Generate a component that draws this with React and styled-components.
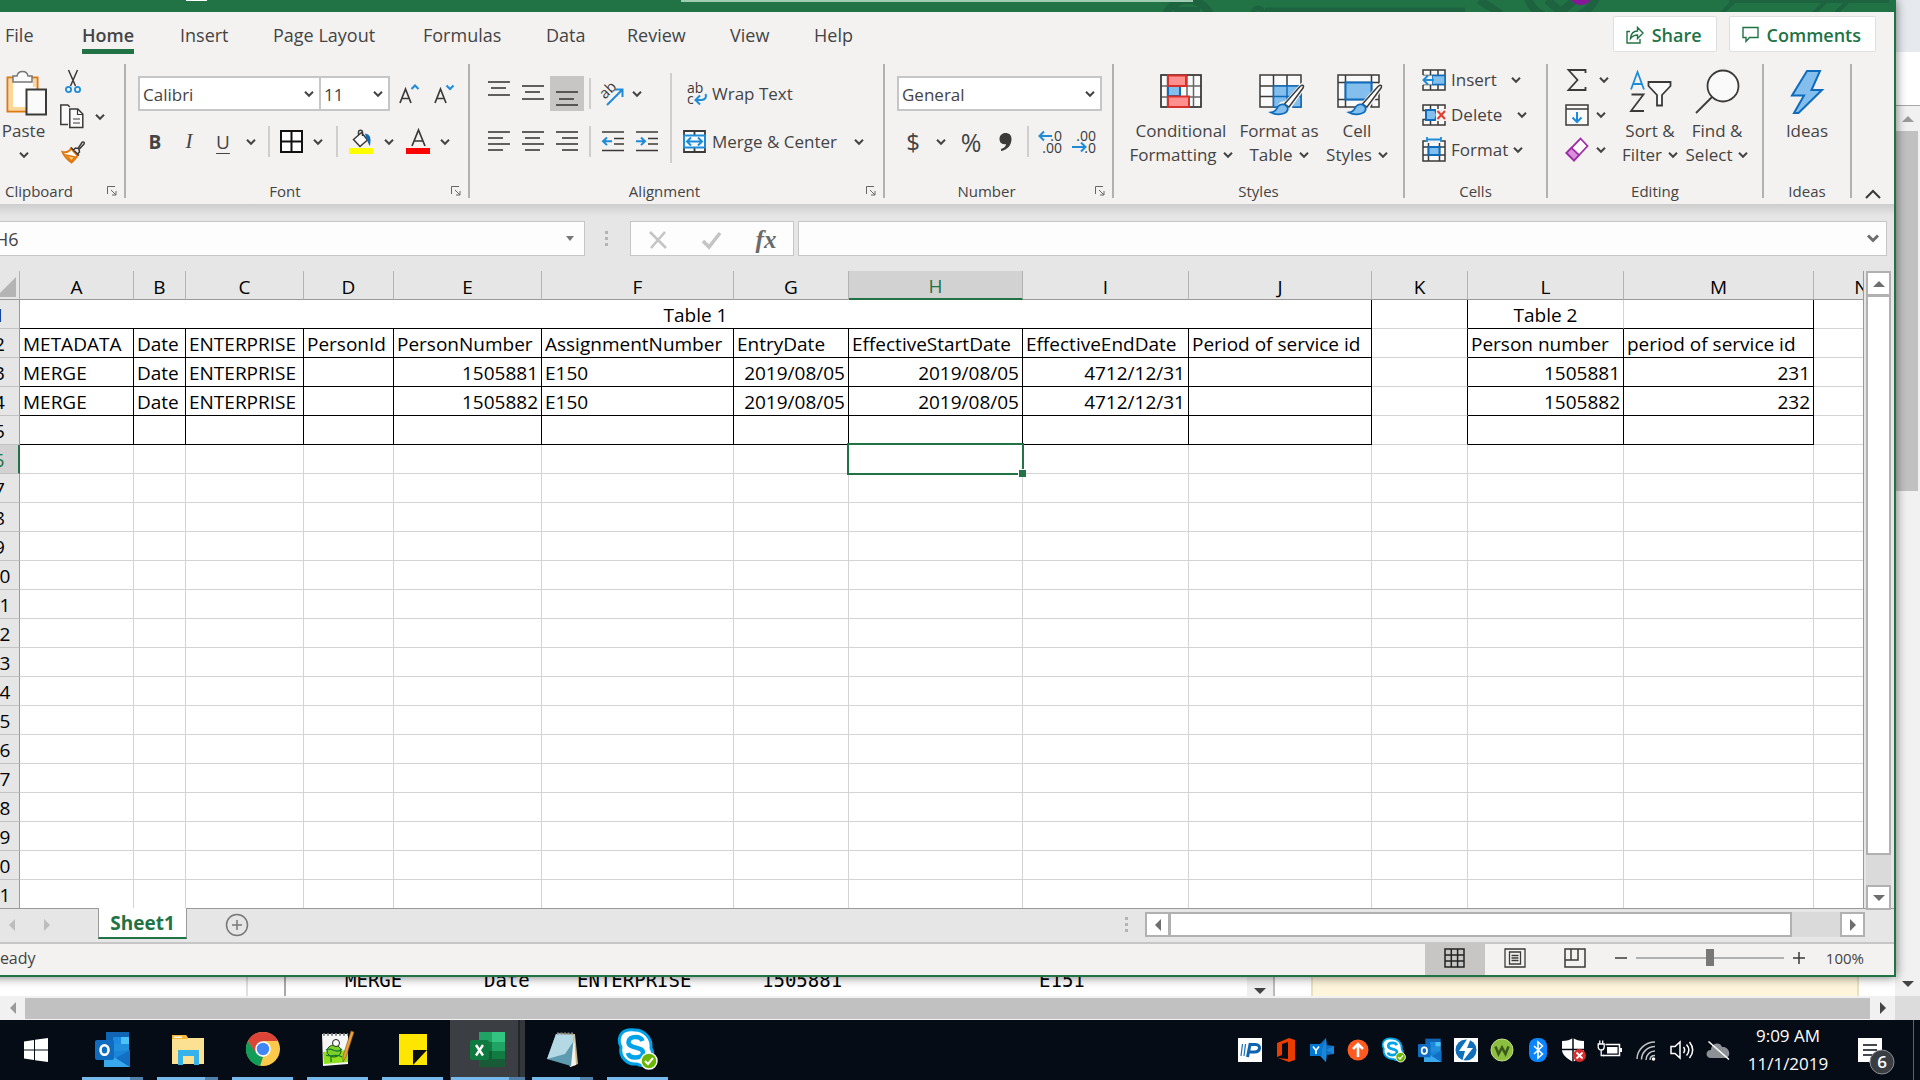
import React, { useState } from "react";
import styled, { createGlobalStyle, css } from "styled-components";

const GlobalStyle = createGlobalStyle`
  * {
    box-sizing: border-box;
  }
  body {
    margin: 0;
    overflow: hidden;
    font-family: "Open Sans", "Noto Sans", sans-serif;
    font-size: 17px;
    color: #444;
  }
  button, input, select {
    font: inherit;
    color: inherit;
    margin: 0;
    padding: 0;
    border: 0;
    background: none;
  }
  svg {
    flex: none;
    overflow: visible;
  }
`;

/* ---------- desktop and the browser page behind ---------- */

const Desktop = styled.div`
  position: relative;
  display: flex;
  flex-direction: column;
  height: 100vh;
  overflow: hidden;
  background: #fff;
`;

const Browser = styled.div`
  flex: 1;
  display: flex;
  min-height: 0;
`;

const BrowserPage = styled.div`
  flex: 1;
  display: flex;
  flex-direction: column;
  justify-content: flex-end;
`;

const PageStrip = styled.div`
  display: flex;
  height: 29px;
`;

const PageMargin = styled.div`
  width: 248px;
  border-right: 2px solid #e0e0e0;
`;

const EditorBox = styled.div`
  flex: 1;
  display: flex;
  margin-left: 36px;
  border-left: 2px solid #aaa;
  border-right: 2px solid #bbb;
`;

const EditorLine = styled.div`
  flex: 1;
  display: grid;
  grid-template-columns: 139px 93px 185px 277px 1fr;
  padding: 1px 0 0 59px;
  font-family: "DejaVu Sans Mono", "Liberation Mono", monospace;
  font-size: 19px;
  line-height: 24px;
  color: #000;
`;

const EditorScroll = styled.div`
  display: flex;
  align-items: flex-end;
  justify-content: center;
  width: 26px;
  padding-bottom: 2px;
  background: #f0f0f0;
`;

const NotePanel = styled.div`
  width: 548px;
  margin: 0 36px;
  background: #fff5dc;
  border: 2px solid #e8e2c0;
  border-width: 0 2px;
`;

const PageScrollX = styled.div`
  display: flex;
  align-items: center;
  height: 24px;
  background: #f1f1f1;
`;

const PageScrollThumbX = styled.div`
  flex: 1;
  height: 21px;
  background: #c1c1c1;
`;

const PageScrollEnd = styled.div`
  display: flex;
  justify-content: center;
  width: 25px;
`;

const BrowserSide = styled.div`
  display: flex;
  flex-direction: column;
  width: 25px;
  background: #f1f1f1;
`;

const SideHead = styled.div`
  height: 52px;
  background: #e6eaee;
`;

const SideBlank = styled.div`
  height: 54px;
  background: #fff;
  border-bottom: 1px solid #a8a8a8;
`;

const SideButton = styled.div`
  display: flex;
  align-items: center;
  justify-content: center;
  height: 25px;
`;

const SideThumb = styled.div`
  height: 360px;
  margin-right: 2px;
  background: #c1c1c1;
`;

const SideSpace = styled.div`
  flex: 1;
`;

const SideCorner = styled.div`
  height: 24px;
  background: #dcdcdc;
`;

/* ---------- window ---------- */

const Window = styled.div`
  position: absolute;
  top: 0;
  right: 24px;
  bottom: 103px;
  left: -22px;
  display: flex;
  flex-direction: column;
  background: #e6e6e6;
  border: 2px solid #217346;
  border-width: 0 2px 2px 0;
  box-shadow: 0 0 10px rgba(0, 0, 0, 0.55);
`;

const TitleBar = styled.div`
  display: flex;
  height: 12px;
  padding-left: 208px;
  overflow: hidden;
  background: #217346;
`;

const QuickMark = styled.div`
  flex: none;
  width: 21px;
  height: 1px;
  background: #fff;
`;

const SearchEdge = styled.div`
  position: relative;
  z-index: 1;
  flex: none;
  width: 512px;
  height: 2px;
  margin-left: 474px;
  background: #a0ccb3;
`;

const TitleArt = styled.svg`
  width: 735px;
  height: 12px;
  margin-left: auto;
`;

const TitleArtBox = styled.div`
  flex: 1;
  display: flex;
  min-width: 0;
  margin-left: -34px;
  overflow: hidden;
`;

const TabRow = styled.div`
  display: flex;
  height: 42px;
  padding-left: 27px;
  background: #f3f2f1;
`;

const TabCell = styled.div`
  width: ${(p) => p.$width}px;
`;

const Tab = styled.button`
  height: 42px;
  padding-top: 9px;
  font-size: 18px;
  line-height: 28px;
  white-space: nowrap;
  border-bottom: 5px solid ${(p) => (p.$active ? "#217346" : "transparent")};
  font-weight: ${(p) => (p.$active ? 600 : 400)};
`;

const TabActions = styled.div`
  display: flex;
  gap: 12px;
  margin-left: auto;
  padding: 4px 18px 0 0;
`;

const ActionButton = styled.button`
  display: flex;
  align-items: center;
  gap: 8px;
  height: 36px;
  padding: 1px 14px 0 12px;
  background: #fff;
  border: 1px solid #e1dfdd;
  border-radius: 2px;
  color: #217346;
  font-size: 18px;
  font-weight: 600;
`;

const Ribbon = styled.div`
  display: flex;
  height: 150px;
  padding-top: 10px;
  background: #f3f2f1;
`;

const Group = styled.section`
  display: flex;
  flex-direction: column;
  width: ${(p) => p.$width}px;
  height: 134px;
  border-right: 2px solid #b1b1b1;
`;

const GroupBody = styled.div`
  flex: 1;
  display: flex;
  padding-left: ${(p) => p.$left || 0}px;
`;

const GroupFoot = styled.div`
  display: flex;
  align-items: center;
  height: 14px;
  font-size: 15px;
  line-height: 14px;
`;

const Launcher = styled.button`
  display: flex;
  width: 17px;
  margin-right: 7px;
  justify-content: flex-end;
`;

const GroupTitle = styled.span`
  flex: 1;
  text-align: center;
`;

const Lines = styled.div`
  display: flex;
  flex-direction: column;
  gap: 13px;
  padding-top: 12px;
`;

const Line = styled.div`
  display: flex;
  align-items: center;
  height: 35px;
`;

const Tool = styled.button`
  display: flex;
  align-items: center;
  justify-content: center;
  width: ${(p) => p.$width || 34}px;
  height: 35px;
  background: ${(p) => (p.$pressed ? "#c8c6c4" : "none")};
  font-size: ${(p) => p.$size || 19}px;
  font-weight: ${(p) => (p.$bold ? 700 : 400)};
  font-style: ${(p) => (p.$italic ? "italic" : "normal")};
  font-family: ${(p) => (p.$italic ? '"Liberation Serif", serif' : "inherit")};
  text-decoration: ${(p) => (p.$underline ? "underline" : "none")};
  text-underline-offset: 4px;
`;

const FunctionTool = styled(Tool)`
  color: #6a6a6a;
`;

const WideTool = styled.button`
  display: flex;
  align-items: center;
  gap: ${(p) => p.$gap || 6}px;
  white-space: nowrap;
`;

const Divider = styled.span`
  width: 2px;
  height: ${(p) => p.$height || 31}px;
  margin: 0 ${(p) => p.$gap || 0}px;
  background: #d0cecc;
`;

const TallDivider = styled(Divider)`
  margin: 9px 11px 0 6px;
`;

const Combo = styled.label`
  position: relative;
  width: ${(p) => p.$width}px;
  height: 35px;
  margin-right: ${(p) => (p.$joined ? -2 : 0)}px;
  background: #fff;
  border: 2px solid #c6c6c6;

  svg {
    position: absolute;
    top: 13px;
    right: 5px;
    pointer-events: none;
  }
`;

const ComboSelect = styled.select`
  appearance: none;
  width: 100%;
  height: 31px;
  padding: 1px 0 0 3px;
  border-radius: 0;
  outline: 0;
`;

const Stack = styled.div`
  display: flex;
  flex-direction: column;
  margin-top: ${(p) => (p.$raised ? -2 : 0)}px;
`;

const StackRow = styled.div`
  display: flex;
  align-items: center;
  justify-content: space-between;
  width: ${(p) => p.$width}px;
  height: 35px;
`;

const BigTool = styled.button`
  display: flex;
  flex-direction: column;
  align-items: center;
  width: ${(p) => p.$width}px;
  height: 108px;
  line-height: 24px;
`;

const BigIcon = styled.span`
  display: flex;
  align-items: center;
  height: 55px;
`;

const BigLine = styled.span`
  display: flex;
  align-items: center;
  gap: 6px;
  min-height: 24px;
  white-space: nowrap;
`;

const CollapseButton = styled.button`
  align-self: flex-end;
  display: flex;
  margin: 0 0 5px 13px;
`;

/* ---------- formula bar ---------- */

const FormulaBar = styled.div`
  display: flex;
  align-items: flex-start;
  height: 67px;
  padding: 17px 7px 0 0;
  background: linear-gradient(#cdcdcd, #e6e6e6 12px);
`;

const NameBox = styled.div`
  display: flex;
  align-items: center;
  width: 607px;
  height: 35px;
  padding: 0 10px 0 16px;
  background: #fdfdfd;
  border: 1px solid #c6c6c6;
`;

const NameInput = styled.input`
  flex: 1;
  min-width: 0;
  font-size: 18px;
  outline: 0;
`;

const DotHandle = styled.div`
  display: flex;
  flex-direction: column;
  gap: 3px;
  margin: ${(p) => p.$top}px ${(p) => p.$right}px 0 ${(p) => p.$left}px;

  i {
    width: 3px;
    height: 3px;
    background: #b4b4b4;
  }
`;

const EntryTools = styled.div`
  display: flex;
  width: 164px;
  height: 35px;
  margin-right: 4px;
  background: #fdfdfd;
  border: 1px solid #c6c6c6;
`;

const FormulaField = styled.div`
  flex: 1;
  display: flex;
  align-items: center;
  height: 35px;
  padding-right: 7px;
  background: #fdfdfd;
  border: 1px solid #c6c6c6;
`;

const FormulaInput = styled.input`
  flex: 1;
  height: 33px;
  padding-left: 6px;
  outline: 0;
`;

const BareButton = styled.button`
  display: flex;
`;

/* ---------- sheet ---------- */

const Work = styled.div`
  flex: 1;
  display: flex;
  min-height: 0;
`;

const GridArea = styled.div`
  flex: 1;
  min-width: 0;
  overflow: hidden;
  border-right: 1px solid #999;
`;

const Sheet = styled.table`
  table-layout: fixed;
  width: 1932px;
  border-collapse: separate;
  border-spacing: 0;
  font-size: 19px;
  line-height: 26px;
  color: #000;
`;

const ColHead = styled.th`
  height: 29px;
  padding: ${(p) => (p.$on ? 4 : 3)}px 0 0;
  font-weight: 400;
  line-height: 24px;
  background: ${(p) => (p.$on ? "#d2d2d2" : "#e6e6e6")};
  color: ${(p) => (p.$on ? "#217346" : "#000")};
  border-right: 1px solid #b4b4b4;
  border-bottom: ${(p) => (p.$on ? "2px solid #217346" : "1px solid #999")};
`;

// the selected head has a border that is 1px thicker
const ColLabel = styled.span`
  display: block;
  line-height: ${(p) => (p.$on ? 23 : 24)}px;
`;

const Corner = styled(ColHead)`
  svg {
    display: block;
    margin-left: auto;
    margin-right: 3px;
  }
`;

const RowHead = styled.th`
  height: 29px;
  padding: 2px 0 0 2px;
  font-weight: 400;
  background: ${(p) => (p.$on ? "#d2d2d2" : "#e6e6e6")};
  color: ${(p) => (p.$on ? "#217346" : "#000")};
  border-right: ${(p) => (p.$on ? "2px solid #217346" : "1px solid #999")};
  border-bottom: 1px solid #c2c2c2;
`;

const Cell = styled.td`
  position: relative;
  height: 29px;
  padding: 2px 3px 0;
  white-space: nowrap;
  text-align: ${(p) => p.$align || "left"};
  background: #fff;
  border-right: 1px solid ${(p) => (p.$right ? "#000" : "#d4d4d4")};
  border-bottom: 1px solid ${(p) => (p.$bottom ? "#000" : "#d4d4d4")};
`;

const Selection = styled.div`
  position: absolute;
  inset: -2px;
  z-index: 1;
  border: 2px solid #217346;

  &::after {
    content: "";
    position: absolute;
    right: -4px;
    bottom: -4px;
    width: 7px;
    height: 7px;
    background: #217346;
    border: 1px solid #fff;
    border-width: 1px 0 0 1px;
  }
`;

const ScrollY = styled.div`
  position: relative;
  display: flex;
  flex-direction: column;
  width: 30px;
  margin-bottom: -2px;
  padding-left: 2px;
`;

const scrollPart = css`
  display: flex;
  align-items: center;
  justify-content: center;
  background: #fff;
  border: 2px solid #b1b1b1;
`;

const ScrollButton = styled.button`
  ${scrollPart}
  width: 25px;
  height: 25px;
`;

const ScrollTrackY = styled.div`
  flex: 1;
  width: 25px;
  margin-top: -1px;
  padding-bottom: 30px;
  background: #dadada;
`;

const ScrollThumb = styled.div`
  ${scrollPart}
  height: 100%;
`;

const SheetBar = styled.div`
  display: flex;
  align-items: flex-start;
  height: 34px;
  padding: 0 29px 0 22px;
  background: #e6e6e6;
  border-top: 1px solid #999;
`;

const SheetNav = styled.div`
  display: flex;
  align-items: center;
  gap: 29px;
  width: 98px;
  height: 32px;
  padding-left: 9px;
`;

const SheetLine = styled.div`
  display: flex;
  height: 32px;
`;

const SheetTab = styled.button`
  width: 89px;
  height: 31px;
  margin-top: -1px;
  background: #fff;
  border: 1px solid #999;
  border-top: 0;
  border-bottom: 2px solid #217346;
  color: #217346;
  font-size: 19px;
  font-weight: 700;
  line-height: 28px;
`;

const AddSheet = styled.button`
  display: flex;
  align-items: center;
  margin-left: 38px;
`;

const ScrollX = styled.div`
  display: flex;
  width: 720px;
  margin-top: 3px;
`;

const ScrollTrackX = styled.div`
  flex: 1;
  height: 25px;
  margin-left: -1px;
  padding-right: 48px;
  background: #dadada;
`;

const Spacer = styled.div`
  flex: 1;
`;

const StatusBar = styled.div`
  display: flex;
  align-items: center;
  height: 33px;
  padding: 0 30px 3px 12px;
  background: #f3f2f1;
  border-top: 2px solid #c6c6c6;
  font-size: 15px;
`;

const StatusText = styled.span`
  font-size: 16px;
`;

const ViewButton = styled.button`
  display: flex;
  align-items: center;
  justify-content: center;
  width: 60px;
  height: 31px;
  margin-bottom: -3px;
  padding-bottom: 3px;
  background: ${(p) => (p.$on ? "#c8c6c4" : "none")};
`;

const ZoomBox = styled.div`
  display: flex;
  align-items: center;
  gap: 8px;
  margin: 0 20px 0 9px;
`;

const ZoomRange = styled.input`
  appearance: none;
  width: 148px;
  height: 17px;

  &::-webkit-slider-runnable-track {
    height: 2px;
    background: #b1b1b1;
  }
  &::-webkit-slider-thumb {
    appearance: none;
    width: 8px;
    height: 17px;
    margin-top: -8px;
    background: #7a7876;
  }
`;

/* ---------- taskbar ---------- */

const Taskbar = styled.div`
  position: relative;
  display: flex;
  height: 60px;
  background: #060c15;
  color: #fff;
`;

const TaskButton = styled.button`
  display: flex;
  flex-direction: column;
  align-items: center;
  justify-content: flex-end;
  width: 75px;
  background: ${(p) =>
    p.$active
      ? "linear-gradient(90deg, #3b3f44 68px, #22262b 68px, #22262b 70px, #33373c 70px)"
      : "none"};

  svg {
    margin: auto;
  }
`;

const StartButton = styled(TaskButton)`
  padding-right: 3px;
`;

const TaskMark = styled.span`
  width: ${(p) => (p.$wide ? 74 : 61)}px;
  height: 3px;
  background: ${(p) =>
    p.$many ? "linear-gradient(90deg, #76b9ed 78%, #5080a8 78%)" : "#76b9ed"};
`;

const Tray = styled.div`
  display: flex;
  align-items: center;
  margin-left: auto;
`;

const TrayButton = styled.button`
  display: flex;
  justify-content: center;
  width: 36px;
`;

const Clock = styled.time`
  width: 104px;
  font-size: 17px;
  line-height: 28px;
  text-align: center;
`;

const NoticeButton = styled.button`
  display: flex;
  margin: 12px 17px 0 18px;
`;

const ShowDesktop = styled.div`
  align-self: stretch;
  width: 7px;
  border-left: 1px solid #5d6166;
`;

/* ---------- small drawings ---------- */

const BLUE = "#1e8bd8";
const INK = "#3b3a39";

const Chevron = ({ size = 10 }) => (
  <svg width={size} height="6" viewBox="0 0 10 6" fill="none" stroke="#444" strokeWidth="2">
    <path d="M1 .8l4 4 4-4" />
  </svg>
);

const Triangle = ({ dir, color = "#6e6e6e" }) => {
  const points = {
    up: "0,6 6,0 12,6",
    down: "0,0 12,0 6,6",
    left: "6,0 6,12 0,6",
    right: "0,0 6,6 0,12",
  };
  const upright = dir === "up" || dir === "down";
  return (
    <svg width={upright ? 12 : 6} height={upright ? 6 : 12}>
      <polygon points={points[dir]} fill={color} />
    </svg>
  );
};

// x and y leave blank room on the left and the top of the drawing
const Icon = ({ w = 24, h = 24, x = 0, y = 0, children, ...rest }) => (
  <svg
    width={w + x}
    height={h + y}
    viewBox={`${-x} ${-y} ${w + x} ${h + y}`}
    fill="none"
    stroke={INK}
    strokeWidth="1.5"
    {...rest}
  >
    {children}
  </svg>
);

const LauncherIcon = () => (
  <Icon w={10} h={10} stroke="#666" strokeWidth="1">
    <path d="M.5 8V.5H8M4 4l5 5M9 5v4H5" />
  </Icon>
);

// rows of [x1, x2, y]
const TextLines = ({ rows }) => (
  <Icon w={22} h={30} strokeWidth="1.6">
    {rows.map(([a, b, y]) => (
      <path key={y} d={`M${a} ${y}H${b}`} />
    ))}
  </Icon>
);

const PasteIcon = () => (
  <Icon w={41} h={46} x={6} y={2}>
    <path d="M1.5 7.5h30v34h-30z" fill="#fff" stroke="#e07a10" strokeWidth="2" />
    <path d="M3 9h4v28h13v3H3z" fill="#fbd896" stroke="none" />
    <path d="M27 9h3v8h-3z" fill="#fbd896" stroke="none" />
    <path d="M7 6h4c1-6 10-6 11 0h4v6H7z" fill="#fafafa" stroke="#777" />
    <path d="M20.500 19.500h19.500v25h-19.500z" fill="#fafafa" strokeWidth="2" />
  </Icon>
);

const CutIcon = () => (
  <Icon w={16} h={25}>
    <path d="M3.500 1l7 16M12.500 1l-7 16" />
    <circle cx="3.500" cy="20.500" r="2.600" stroke={BLUE} strokeWidth="1.800" />
    <circle cx="12.500" cy="20.500" r="2.600" stroke={BLUE} strokeWidth="1.800" />
  </Icon>
);

const CopyIcon = () => (
  <Icon w={24} h={25} x={2}>
    <path d="M8 20.500H.8V1h7l2 2" fill="#fafafa" />
    <path d="M9.800 5h8l5 5v13.500h-13z" fill="#fafafa" />
    <path d="M17.500 5v5.500H23M13 15h7M13 19h7" strokeWidth="1.200" />
  </Icon>
);

const BrushIcon = () => (
  <Icon w={24} h={24}>
    <path d="M1.500 12c4 1 7-1 8.500-3.500l6.500 7C15.500 18 12 21 10.500 22.500 7 20 3 16 1.500 12z" fill="#fff" stroke="#e07a10" strokeWidth="2" />
    <path d="M5 15l9 2-3.500 4.500z" fill="#fbc66b" stroke="#e07a10" />
    <path d="M10 7.500l8 8M12.500 10l2-2 2.500.5L21 2.500c1-1.500 3 .2 2 1.500L18 9.500l.5 2.500-2 2" />
  </Icon>
);

const FontStepIcon = ({ up }) => (
  <Icon w={20} h={20}>
    <path d="M1 19L6.500 5 12 19M3 14.500h7" strokeWidth="1.700" />
    <path d={up ? "M12.500 5l3.500-3.500L19.500 5" : "M12.500 1.500L16 5l3.500-3.500"} stroke={BLUE} strokeWidth="2" />
  </Icon>
);

const BordersIcon = () => (
  <Icon w={23} h={23} stroke="#111" strokeWidth="2">
    <path d="M1 1h21v21H1zM11.500 1v21M1 11.500h21" fill="#fff" />
  </Icon>
);

const FillIcon = () => (
  <Icon w={24} h={25}>
    <path d="M4.500 10.500l8-7 6 7.500-7.500 6.500zM9.500 6V3c0-2.500 4-2.500 4 0v4" fill="#fafafa" />
    <path d="M17 5.500c3 .5 4.500 3 3.500 9.500-1.500-2-1.800-5-3.500-9.500z" fill="#1268b3" stroke="#1268b3" />
    <path d="M0 19h24v6H0z" fill="#ff0" stroke="none" />
  </Icon>
);

const FontColorIcon = () => (
  <Icon w={24} h={25}>
    <path d="M6 17L12.500 1 19 17M8 12h9" strokeWidth="1.700" />
    <path d="M0 19h24v6H0z" fill="#f00" stroke="none" />
  </Icon>
);

const OrientIcon = () => (
  <Icon w={26} h={26} stroke="none">
    <text x="4" y="18" fontSize="15" fill={INK} transform="rotate(-45 6 16)">ab</text>
    <path d="M8 24L23 9M16 8.500h7.500V16" stroke={BLUE} strokeWidth="2" />
  </Icon>
);

const WrapIcon = () => (
  <Icon w={19} h={26} x={4} stroke="none">
    <text x="0" y="12" fontSize="14" fill={INK}>ab</text>
    <text x="0" y="23" fontSize="14" fill={INK}>c</text>
    <path d="M18.500 13c1.500 3-.5 6-4 6h-5M13 14.500L8.500 19l4.500 4.500" stroke={BLUE} strokeWidth="2" />
  </Icon>
);

const MergeIcon = () => (
  <Icon w={23} h={23}>
    <path d="M1 1h21v21H1zM11.500 1v4M11.500 18v4" fill="#fafafa" strokeWidth="1.800" />
    <path d="M1 5.500h21v12H1z" fill="#fafafa" stroke={BLUE} strokeWidth="2" />
    <path d="M4 11.500h15M8 7.500l-4 4 4 4M15 7.500l4 4-4 4" stroke={BLUE} strokeWidth="2" />
  </Icon>
);

const IndentIcon = ({ out }) => (
  <Icon w={22} h={24} strokeWidth="1.600">
    <path d="M0 2h22M12 8.500h10M12 14h10M0 20.500h22" />
    <path d={out ? "M1 11.300h9M5 7.500l-4 3.800 4 3.800" : "M0 11.300h9M5 7.500l4 3.800-4 3.800"} stroke={BLUE} strokeWidth="2" />
  </Icon>
);

const CommaIcon = () => (
  <Icon w={14} h={20} stroke="none">
    <path d="M6.500 1c3.500 0 6 2 6 6 0 6-4 11-10.500 12v-2c3.500-1 5-3 5-5-4 1-6.500-1.500-6.500-5s2.500-6 6-6z" fill={INK} />
  </Icon>
);

const DecimalIcon = ({ more }) => (
  <Icon w={24} h={26} stroke="none">
    <text x="24" y="12" textAnchor="end" fontSize="14" fill={INK}>{more ? ".0" : ".00"}</text>
    <text x="24" y="24" textAnchor="end" fontSize="14" fill={INK}>{more ? ".00" : ".0"}</text>
    <path
      d={more ? "M1 7h13M6 2.500L1.500 7 6 11.500" : "M0 18h13M9 13.500l4.500 4.500L9 22.500"}
      stroke={BLUE}
      strokeWidth="2"
    />
  </Icon>
);

const ConditionalIcon = () => (
  <Icon w={42} h={35}>
    <path d="M1 1h40v32H1zM7.500 1v32M27 1v32M33.500 1v32M1 12h40M1 23h40" fill="#fafafa" stroke="#666" />
    <path d="M1 1h40v32H1z" />
    <path d="M8 12h12v10H8z" fill="#83beec" stroke="#0f6cbd" strokeWidth="2" />
    <path d="M8 1.500h18V12H8zM8 22.500h21V33H8z" fill="#ff9090" stroke="#d8302a" strokeWidth="2" />
  </Icon>
);

const BrushOverlay = () => (
  <>
    <path d="M14 38c4 0 5-2 6.500-5 1-3 3.500-4 6-3.500L43 11c2-1.500 3 0 2 1.500L31 32c1 3-1.500 7-7 7.500-4 .5-7 0-10-1.500z" fill="#f3f2f1" stroke="#f3f2f1" strokeWidth="4" />
    <path d="M25.500 30L41 12.500c2.500-2 4.500-1.500 3 1.500L30 33z" fill="#fff" />
    <path d="M12 38.500c5-.5 5-3 7-6 2-2.500 6-3 8.500-.5s1 6.500-3 7.500c-4 1.200-9 1-12.500-1z" fill="#83beec" stroke="#0f6cbd" strokeWidth="1.800" />
  </>
);

const TableIcon = () => (
  <Icon w={46} h={42} x={5} y={7}>
    <path d="M1 1h41v32H1zM1 12h41M1 22.500h41M14.500 1v32M28 1v32" fill="#fafafa" />
    <path d="M14.500 12H42v21H14.500zM28 12v21M14.500 22.500H42" fill="#83beec" stroke="#0f6cbd" />
    <BrushOverlay />
  </Icon>
);

const CellStyleIcon = () => (
  <Icon w={46} h={42} x={5} y={7}>
    <path d="M1 1h41v32H1zM8.500 1v32M34.500 1v32M1 8.500h41M1 25.500h41" fill="#fafafa" />
    <path d="M8.500 8.500h26v17h-26z" fill="#83beec" stroke="#0f6cbd" strokeWidth="2" />
    <BrushOverlay />
  </Icon>
);

const InsertCellsIcon = () => (
  <Icon w={24} h={22}>
    <path d="M1 6V1h22v20H1v-5M1 6.500h22M1 15.500h22M8.500 1v20M16 1v20" fill="#fafafa" />
    <path d="M10 6.500h13v9H10z" fill="#83beec" stroke="#0f6cbd" />
    <path d="M0 6.500h10v9H0z" fill="#f3f2f1" stroke="none" />
    <path d="M1.500 11H12M6 6.500L1.500 11 6 15.500" stroke={BLUE} strokeWidth="2" />
  </Icon>
);

const DeleteCellsIcon = () => (
  <Icon w={24} h={22}>
    <path d="M1 6.500V1h22v5.500zM1 21v-5.500h22V21zM8.500 1v5.500M16 1v5.500M8.500 15.500V21M16 15.500V21" fill="#fafafa" />
    <path d="M4 6h9l2 5-2 5H4z" fill="#83beec" stroke="#0f6cbd" strokeWidth="2" />
    <path d="M14 5h10v12H14z" fill="#f3f2f1" stroke="none" />
    <path d="M15.500 7l7.500 8M23 7l-7.500 8" stroke="#e03c31" strokeWidth="2" />
  </Icon>
);

const FormatCellsIcon = () => (
  <Icon w={24} h={25}>
    <path d="M1 4h22v20H1zM1 10h22M1 18h22M6.500 4v20M17.500 4v20" fill="#fafafa" />
    <path d="M6.500 10h11v8h-11z" fill="#83beec" stroke="#0f6cbd" strokeWidth="2" />
    <path d="M4 0h16v6H4z" fill="#f3f2f1" stroke="none" />
    <path d="M5 2.500h14M5 0v5M19 0v5" stroke={BLUE} strokeWidth="1.800" />
  </Icon>
);

const SumIcon = () => (
  <Icon w={20} h={22} strokeWidth="1.800">
    <path d="M18.500 4V1H1.500l9 10-9 10h17v-3" />
  </Icon>
);

const FillDownIcon = () => (
  <Icon w={24} h={22}>
    <path d="M1 1h22v20H1zM1 5h22" fill="#fafafa" />
    <path d="M12 8v10M7.500 13.500L12 18l4.500-4.500" stroke={BLUE} strokeWidth="2" />
  </Icon>
);

const EraserIcon = () => (
  <Icon w={24} h={24} stroke="#9c2fa5" strokeWidth="1.800">
    <path d="M15.500 .5l7 7.500L9 22.500 1.500 15z" fill="#fff" />
    <path d="M6.500 9.800L14 17l-5 5.500L1.500 15z" fill="#d98fdc" />
  </Icon>
);

const SortIcon = () => (
  <Icon w={43} h={43} strokeWidth="1.800">
    <path d="M2 19.500L8.500 2l6.500 17.500M4 14h9" stroke={BLUE} />
    <path d="M2.500 24.500h12L2 41h13" />
    <path d="M19.500 12h22v4L33 25v10.500h-5V25l-8.500-9z" fill="#fafafa" />
  </Icon>
);

const FindIcon = () => (
  <Icon w={45} h={46} strokeWidth="1.800">
    <circle cx="28" cy="17" r="15.500" fill="#fafafa" />
    <path d="M17 28L1 44" />
  </Icon>
);

const IdeasIcon = () => (
  <Icon w={34} h={44}>
    <path d="M17 1h13l-8.500 19H32L8.500 43H4l10-17.500H2z" fill="#83beec" stroke="#0f6cbd" strokeWidth="2" />
  </Icon>
);

const ShareIcon = () => (
  <Icon w={18} h={18} stroke="#217346" strokeWidth="1.400">
    <path d="M4 5.500H1v11.500h13v-4" />
    <path d="M4.500 12.500c.5-5 3-7.500 7-7.500V1.500l5.500 5.500-5.500 5.500V9c-3 0-5 1-7 3.500z" />
  </Icon>
);

const CommentIcon = () => (
  <Icon w={17} h={17} stroke="#217346" strokeWidth="1.400">
    <path d="M1 1.500h15v10H7.500L4 15.500v-4H1z" />
  </Icon>
);

const NormalViewIcon = () => (
  <Icon w={21} h={20} stroke="#222">
    <path d="M1 1h19v18H1zM1 7h19M1 13h19M7.300 1v18M13.600 1v18" />
  </Icon>
);

const PageViewIcon = () => (
  <Icon w={22} h={20}>
    <path d="M1 1h20v18H1zM5.500 4h11v12h-11zM7.500 7.500h7M7.500 10h7M7.500 12.500h7" strokeWidth="1.300" />
  </Icon>
);

const BreakViewIcon = () => (
  <Icon w={22} h={20}>
    <path d="M1 1h20v18H1zM1 12h13V1M7 1v11" />
  </Icon>
);

/* ---------- taskbar drawings ---------- */

const Svg36 = ({ children, size = 36 }) => (
  <svg width={size} height={size} viewBox="0 0 36 36">{children}</svg>
);

const WindowsIcon = () => (
  <svg width="24" height="24" viewBox="0 0 24 24" fill="#fff">
    <path d="M0 3.500L10 2v9.500H0zM11 1.800L24 0v11.500H11zM0 12.500h10V22L0 20.500zM11 12.500h13V24l-13-1.800z" />
  </svg>
);

const OutlookIcon = ({ size }) => (
  <Svg36 size={size}>
    <path d="M11 1h23v19H11z" fill="#1066b5" />
    <path d="M18 6h8v7h-8z" fill="#1c8ae0" />
    <path d="M26 6h8v7h-8z" fill="#4cc3f5" />
    <path d="M18 13h16v8H18z" fill="#2190dc" />
    <path d="M9 21l26-2v17H9z" fill="#1a86d9" />
    <path d="M9 20l26 16H9z" fill="#38a9ec" />
    <path d="M35 19L21 27l14 9z" fill="#1170c4" />
    <rect x="0" y="9" width="19" height="20" rx="2" fill="#0f6cc0" />
    <ellipse cx="9.500" cy="19" rx="4" ry="4.800" fill="none" stroke="#fff" strokeWidth="2.600" />
  </Svg36>
);

const FolderIcon = () => (
  <Svg36>
    <path d="M2 4h14l2 3h16v26H2z" fill="#fce193" />
    <path d="M2 4h14l1.500 4H2z" fill="#f7b731" />
    <path d="M4 5.500h8v1.500H4z" fill="#fff" />
    <path d="M8 34V19h21v15h-5v-9H13v9z" fill="#36b3ea" />
  </Svg36>
);

const ChromeIcon = () => (
  <Svg36>
    <circle cx="18" cy="18" r="17" fill="#fbc94b" />
    <path d="M18 1A17 17 0 0 1 33 10H18L10.500 22 3 10A17 17 0 0 1 18 1z" fill="#db4437" />
    <path d="M3 10l8 12 7 4-3 9A17 17 0 0 1 3 10z" fill="#0f9d58" />
    <circle cx="18" cy="18" r="7.800" fill="#fff" />
    <circle cx="18" cy="18" r="6.200" fill="#4285f4" />
  </Svg36>
);

const NotepadPlusIcon = () => (
  <Svg36>
    <path d="M2 3h26v30L3 35z" fill="#f6f6f6" />
    <path d="M3 21l25-2v12L4 33z" fill="#8fe01e" />
    <path d="M3 3.500h25" stroke="#888" strokeWidth="2.500" strokeDasharray="2 2" />
    <ellipse cx="14" cy="20" rx="7" ry="6" fill="#7bd02a" stroke="#234d10" />
    <circle cx="16" cy="12" r="3.500" fill="#fff" stroke="#222" />
    <path d="M6 19c6-4 9 5 16-1M6 24c5 3 10-2 16 2M11 26v5" stroke="#173" fill="none" strokeWidth="1.300" />
    <path d="M34 1L26 26l-3 5v-6L31 0z" fill="#e8a13a" stroke="#8a5010" strokeWidth=".6" />
  </Svg36>
);

const StickyIcon = () => (
  <Svg36>
    <path d="M4 3h28v16H18v15H4z" fill="#ffe600" />
    <path d="M18 34V19h14z" fill="#0a0d12" />
    <path d="M32 19v15H18z" fill="#ffe600" />
  </Svg36>
);

const ExcelIcon = () => (
  <Svg36>
    <path d="M9 1h13v35H9z" fill="#21a366" />
    <path d="M22 1h13v10H22z" fill="#33c481" />
    <path d="M9 11h26v9H9z" fill="#107c41" />
    <path d="M22 11h13v9H22z" fill="#21a366" />
    <path d="M9 20h26v16H9z" fill="#185c37" />
    <path d="M22 20h13v8H22z" fill="#107c41" />
    <rect x="0" y="9" width="19" height="20" rx="2" fill="#0f7a40" />
    <path d="M6 14l7 10.500M13 14L6 24.500" stroke="#fff" strokeWidth="2.400" />
  </Svg36>
);

const NotepadIcon = () => (
  <Svg36>
    <path d="M12 2l18 1 3 30-8 3z" fill="#c9b48a" />
    <path d="M29 4l2 30-6 2z" fill="#f4f1e6" />
    <path d="M11 3l18 1-3 31L2 28z" fill="#5f9bb0" />
    <path d="M11 3l18 1-1 7-8 12L2 28z" fill="#b5d9e4" />
    <path d="M12 2.500h17" stroke="#888" strokeWidth="2" strokeDasharray="2 1.500" />
  </Svg36>
);

const SkypeIcon = ({ size = 40 }) => (
  <svg width={size} height={size} viewBox="0 0 40 40">
    <path d="M4 4c5-5 10-3 13-3 9 0 17 8 16 18 3 5 2 11-2 15-4 3-9 3-12 1C9 36 1 28 3 18 0 13 1 7 4 4z" fill="#fff" stroke="#00a3e8" strokeWidth="3" />
    <path d="M24.500 12c-1-3-3.500-4-7-4-4 0-7 2-7 5.200 0 6.800 14.500 4 14.500 10.300 0 3-3 5-7.500 5-4 0-7-1.800-7.500-4.500" fill="none" stroke="#00a3e8" strokeWidth="4.500" />
    <circle cx="31" cy="32" r="8" fill="#6bb700" stroke="#fff" strokeWidth="1.500" />
    <path d="M27 32l3 3 5-6" fill="none" stroke="#fff" strokeWidth="2" />
  </svg>
);

const trayIcons = [
  ["Citrix", (
    <>
      <path d="M0 0h24v24H0z" fill="#fff" />
      <path d="M3 18L4.500 6M6 18L7.500 6" stroke="#1b6fb5" strokeWidth="1.200" />
      <path d="M9.500 19L12 6.500h5.500c6 0 5 7.500-1 7.500h-5" stroke="#0f64b0" strokeWidth="3" fill="none" />
    </>
  )],
  ["Office", <path d="M3 5l12-5 6 2v20l-6 2L4 20l10 1V4L8 6v11l-5 2z" fill="#eb3c00" />],
  ["Yammer", (
    <>
      <path d="M8 8l8-8 1 7 7 1v8l-7 1-1 7-8-8z" fill="#106ebe" />
      <path d="M16 12l8-4v8zM16 0v24l-6-7z" fill="#1a86d9" />
      <path d="M0 6h12v12H0z" fill="#0078d4" />
      <path d="M3 8.500l3 4 3-4M6 12v4" stroke="#fff" strokeWidth="1.600" fill="none" />
    </>
  )],
  ["Update", (
    <>
      <circle cx="12" cy="12" r="10.500" fill="#ff5a1f" />
      <path d="M12 19V6M7 11l5-5 5 5" stroke="#fff" strokeWidth="2.600" fill="none" />
    </>
  )],
  ["Skype", null],
  ["Outlook", null],
  ["Power", (
    <>
      <path d="M0 0h24v24H0z" fill="#fff" />
      <circle cx="12" cy="12" r="10.500" fill="#0f6fb8" />
      <path d="M14 0L5 13h6L8 24l11-14h-6l4-10z" fill="#fff" />
    </>
  )],
  ["Webroot", (
    <>
      <circle cx="12" cy="12" r="11" fill="#8cbf3f" stroke="#c3dc8c" />
      <path d="M5.500 8.500l3 7.500L12 9.500l3.500 6.500 3-7.500" stroke="#3c5a1c" strokeWidth="2.600" fill="none" />
    </>
  )],
  ["Bluetooth", (
    <>
      <rect x="3" y="0" width="18" height="24" rx="8" fill="#0a84ff" />
      <path d="M8 8l8.500 8L12 20V4l4.500 4L8 16" stroke="#fff" strokeWidth="1.600" fill="none" />
    </>
  )],
  ["Security", (
    <>
      <path d="M0 3c5 0 8-1 11-3 3 2 6 3 11 3v9c0 5-6 9-11 12C6 21 0 17 0 12z" fill="#fff" />
      <path d="M11 0v24M0 11.500h22" stroke="#060c15" strokeWidth="1.500" />
      <circle cx="17.500" cy="17.500" r="6.500" fill="#d92c2c" />
      <path d="M14.500 14.500l6 6M20.500 14.500l-6 6" stroke="#fff" strokeWidth="1.800" />
    </>
  )],
  ["Battery", (
    <>
      <path d="M7.500 6.500h14v11H5" stroke="#fff" strokeWidth="1.500" fill="none" />
      <path d="M9 9h10.500v6.500H9zM22 10h2v4h-2z" fill="#fff" />
      <path d="M.2 6h6v3c0 4-6 4-6 0zM1.800 2.500V6M4.700 2.500V6M3.200 12v5.500H6" stroke="#fff" strokeWidth="1.300" fill="none" />
    </>
  )],
  ["Wireless", (
    <>
      <path d="M3 21C3 12 11 4 21 4M7.500 21.500c0-7 6-13 13.500-13M12 22c0-5 4-9 9-9M16 22c0-3 2-4.500 5-4.500" stroke="#bfc3c7" strokeWidth="1.500" fill="none" />
      <circle cx="19.500" cy="21" r="1.800" fill="#fff" />
    </>
  )],
  ["Volume", (
    <path d="M1 8.500h4L10 4v16l-5-4.500H1zM13.500 9c1.500 2 1.500 4 0 6M16.500 6.500c3 3.500 3 7.500 0 11M19.500 4c4 5 4 11 0 16" stroke="#fff" strokeWidth="1.500" fill="none" />
  )],
  ["Cloud", (
    <>
      <path d="M5 20c-6 0-6-8 0-8 0-7 9-9 11-3 8-1 10 11 3 11z" fill="#8d9094" />
      <path d="M2.500 3.500L23 21.500" stroke="#fff" strokeWidth="1.600" />
    </>
  )],
];

const taskItems = [
  { name: "Outlook", icon: <OutlookIcon />, many: true },
  { name: "File Explorer", icon: <FolderIcon />, many: true },
  { name: "Chrome", icon: <ChromeIcon /> },
  { name: "Notepad++", icon: <NotepadPlusIcon /> },
  { name: "Sticky Notes", icon: <StickyIcon /> },
  { name: "Excel", icon: <ExcelIcon />, many: true, active: true },
  { name: "Notepad", icon: <NotepadIcon />, many: true },
  { name: "Skype", icon: <SkypeIcon /> },
];

/* ---------- data ---------- */

const tabs = [
  ["File", 77],
  ["Home", 98],
  ["Insert", 93],
  ["Page Layout", 150],
  ["Formulas", 123],
  ["Data", 81],
  ["Review", 103],
  ["View", 84],
  ["Help", 60],
];

const columns = [
  ["A", 114],
  ["B", 52],
  ["C", 118],
  ["D", 90],
  ["E", 148],
  ["F", 192],
  ["G", 115],
  ["H", 174],
  ["I", 166],
  ["J", 183],
  ["K", 96],
  ["L", 156],
  ["M", 190],
  ["N", 96],
];

const values = {
  2: {
    A: "METADATA",
    B: "Date",
    C: "ENTERPRISE",
    D: "PersonId",
    E: "PersonNumber",
    F: "AssignmentNumber",
    G: "EntryDate",
    H: "EffectiveStartDate",
    I: "EffectiveEndDate",
    J: "Period of service id",
    L: "Person number",
    M: "period of service id",
  },
  3: {
    A: "MERGE", B: "Date", C: "ENTERPRISE", E: 1505881, F: "E150",
    G: "2019/08/05", H: "2019/08/05", I: "4712/12/31", L: 1505881, M: 231,
  },
  4: {
    A: "MERGE", B: "Date", C: "ENTERPRISE", E: 1505882, F: "E150",
    G: "2019/08/05", H: "2019/08/05", I: "4712/12/31", L: 1505882, M: 232,
  },
};

const rowNumbers = Array.from({ length: 21 }, (_, i) => i + 1);

const isRight = (v) => typeof v === "number" || /^\d/.test(v || "");

const SheetRow = ({ row }) => {
  const first = row === 1;
  const letters = columns.map((c) => c[0]).slice(first ? 10 : 0);
  return (
    <tr>
      <RowHead scope="row" $on={row === 6}>{row}</RowHead>
      {first && (
        <Cell colSpan={10} $align="center" $right $bottom>Table 1</Cell>
      )}
      {letters.map((col) => {
        const boxed = row <= 5;
        const text = first && col === "L" ? "Table 2" : values[row]?.[col];
        let align = isRight(text) ? "right" : "left";
        if (first) align = "center";
        return (
          <Cell
            key={col}
            $align={align}
            $right={boxed && col !== "N" && !(first && col === "L")}
            $bottom={boxed && col !== "K" && col !== "N"}
          >
            {text}
            {row === 6 && col === "H" && <Selection />}
          </Cell>
        );
      })}
    </tr>
  );
};

const RibbonGroup = ({ title, width, left, launcher, children }) => (
  <Group $width={width}>
    <GroupBody $left={left}>{children}</GroupBody>
    <GroupFoot>
      <GroupTitle>{title}</GroupTitle>
      {launcher && (
        <Launcher aria-label={`${title} settings`}>
          <LauncherIcon />
        </Launcher>
      )}
    </GroupFoot>
  </Group>
);

const BigButton = ({ width, icon, lines, arrow }) => (
  <BigTool $width={width}>
    <BigIcon>{icon}</BigIcon>
    {lines.map((line, i) => (
      <BigLine key={line}>
        {line}
        {arrow && i === lines.length - 1 && <Chevron />}
      </BigLine>
    ))}
  </BigTool>
);

const App = () => {
  const [activeTab, setActiveTab] = useState("Home");
  const [zoom, setZoom] = useState(100);

  return (
    <Desktop>
      <GlobalStyle />
      <Browser>
        <BrowserPage>
          <PageStrip>
            <PageMargin />
            <EditorBox>
              <EditorLine>
                <span>MERGE</span>
                <span>Date</span>
                <span>ENTERPRISE</span>
                <span>1505881</span>
                <span>E151</span>
              </EditorLine>
              <EditorScroll>
                <Triangle dir="down" color="#444" />
              </EditorScroll>
            </EditorBox>
            <NotePanel />
          </PageStrip>
          <PageScrollX>
            <PageScrollEnd>
              <Triangle dir="left" color="#9a9a9a" />
            </PageScrollEnd>
            <PageScrollThumbX />
            <PageScrollEnd>
              <Triangle dir="right" color="#444" />
            </PageScrollEnd>
          </PageScrollX>
        </BrowserPage>
        <BrowserSide>
          <SideHead />
          <SideBlank />
          <SideButton>
            <Triangle dir="up" color="#9a9a9a" />
          </SideButton>
          <SideThumb />
          <SideSpace />
          <SideButton>
            <Triangle dir="down" color="#444" />
          </SideButton>
          <SideCorner />
        </BrowserSide>
      </Browser>

      <Window>
        <TitleBar>
          <QuickMark />
          <SearchEdge />
          <TitleArtBox>
            <TitleArt viewBox="0 0 735 12" fill="none" stroke="#1e6340" strokeWidth="8">
              <circle cx="29" cy="24" r="24" />
              <path d="M15 7h26v5H15z" fill="#1e6340" stroke="none" />
              <path d="M94 14c0-8 10-8 10 0M106 10h200" strokeWidth="5" />
              <path d="M320 0l22 14M368 -4c4 14 12 18 34 28 22-10 30-14 36-28M388 0l14 12 14-12" />
              <path d="M576 0l-14 14M668 0l-14 14M690 0l-14 14M570 1h160" strokeWidth="4" />
              <circle cx="422" cy="-7" r="12" fill="#881798" stroke="none" />
            </TitleArt>
          </TitleArtBox>
        </TitleBar>

        <TabRow>
          {tabs.map(([name, width]) => (
            <TabCell key={name} $width={width}>
              <Tab $active={name === activeTab} onClick={() => setActiveTab(name)}>
                {name}
              </Tab>
            </TabCell>
          ))}
          <TabActions>
            <ActionButton>
              <ShareIcon />
              Share
            </ActionButton>
            <ActionButton>
              <CommentIcon />
              Comments
            </ActionButton>
          </TabActions>
        </TabRow>

        <Ribbon>
          <RibbonGroup title="Clipboard" width={148} left={22} launcher>
            <BigTool $width={47}>
              <BigIcon>
                <PasteIcon />
              </BigIcon>
              <BigLine>Paste</BigLine>
              <BigLine>
                <Chevron />
              </BigLine>
            </BigTool>
            <Stack>
              <StackRow $width={58}>
                <Tool $width={52} aria-label="Cut"><CutIcon /></Tool>
              </StackRow>
              <StackRow $width={58}>
                <Tool $width={48} aria-label="Copy"><CopyIcon /></Tool>
                <Chevron />
              </StackRow>
              <StackRow $width={58}>
                <Tool $width={52} aria-label="Format Painter"><BrushIcon /></Tool>
              </StackRow>
            </Stack>
          </RibbonGroup>

          <RibbonGroup title="Font" width={344} left={12} launcher>
            <Lines>
              <Line>
                <Combo $width={183} $joined>
                  <ComboSelect aria-label="Font" defaultValue="Calibri">
                    <option>Calibri</option>
                  </ComboSelect>
                  <Chevron />
                </Combo>
                <Combo $width={71}>
                  <ComboSelect aria-label="Font size" defaultValue="11">
                    <option>11</option>
                  </ComboSelect>
                  <Chevron />
                </Combo>
                <Tool $width={38} aria-label="Increase Font Size"><FontStepIcon up /></Tool>
                <Tool $width={32} aria-label="Decrease Font Size"><FontStepIcon /></Tool>
              </Line>
              <Line>
                <Tool $bold>B</Tool>
                <Tool $italic $size={21}>I</Tool>
                <Tool $underline>U</Tool>
                <Tool $width={22} aria-label="Underline options"><Chevron /></Tool>
                <Divider $gap={6} />
                <Tool $width={30} aria-label="Borders"><BordersIcon /></Tool>
                <Tool $width={24} aria-label="Border options"><Chevron /></Tool>
                <Divider $gap={6} />
                <Tool $width={34} aria-label="Fill Color"><FillIcon /></Tool>
                <Tool $width={22} aria-label="Fill options"><Chevron /></Tool>
                <Tool $width={36} aria-label="Font Color"><FontColorIcon /></Tool>
                <Tool $width={18} aria-label="Font color options"><Chevron /></Tool>
              </Line>
            </Lines>
          </RibbonGroup>

          <RibbonGroup title="Alignment" width={415} left={12} launcher>
            <Lines>
              <Line>
                <Tool aria-label="Top Align"><TextLines rows={[[0, 22, 3], [3, 18, 9], [0, 22, 16]]} /></Tool>
                <Tool aria-label="Middle Align"><TextLines rows={[[0, 22, 7], [3, 18, 13], [0, 22, 20]]} /></Tool>
                <Tool $pressed aria-label="Bottom Align"><TextLines rows={[[0, 22, 13], [3, 18, 20], [0, 22, 26]]} /></Tool>
                <Divider $gap={5} />
                <Tool $width={32} aria-label="Orientation"><OrientIcon /></Tool>
                <Tool $width={18} aria-label="Orientation options"><Chevron /></Tool>
              </Line>
              <Line>
                <Tool aria-label="Align Left"><TextLines rows={[[0, 22, 5], [0, 15, 11], [0, 22, 17], [0, 15, 23]]} /></Tool>
                <Tool aria-label="Center"><TextLines rows={[[0, 22, 5], [3, 18, 11], [0, 22, 17], [3, 18, 23]]} /></Tool>
                <Tool aria-label="Align Right"><TextLines rows={[[0, 22, 5], [6, 22, 11], [0, 22, 17], [6, 22, 23]]} /></Tool>
                <Divider $gap={5} />
                <Tool aria-label="Decrease Indent"><IndentIcon out /></Tool>
                <Tool aria-label="Increase Indent"><IndentIcon /></Tool>
              </Line>
            </Lines>
            <TallDivider $height={90} />
            <Lines>
              <Line>
                <WideTool>
                  <WrapIcon />
                  Wrap Text
                </WideTool>
              </Line>
              <Line>
                <WideTool>
                  <MergeIcon />
                  Merge &amp; Center
                </WideTool>
                <Tool $width={44} aria-label="Merge options"><Chevron /></Tool>
              </Line>
            </Lines>
          </RibbonGroup>

          <RibbonGroup title="Number" width={229} left={12} launcher>
            <Lines>
              <Line>
                <Combo $width={205}>
                  <ComboSelect aria-label="Number Format" defaultValue="General">
                    <option>General</option>
                  </ComboSelect>
                  <Chevron />
                </Combo>
              </Line>
              <Line>
                <Tool $width={32} $size={24}>$</Tool>
                <Tool $width={24} aria-label="Currency options"><Chevron /></Tool>
                <Tool $width={36} $size={25}>%</Tool>
                <Tool $width={34} aria-label="Comma Style"><CommaIcon /></Tool>
                <Divider $gap={4} />
                <Tool aria-label="Increase Decimal"><DecimalIcon more /></Tool>
                <Tool aria-label="Decrease Decimal"><DecimalIcon /></Tool>
              </Line>
            </Lines>
          </RibbonGroup>

          <RibbonGroup title="Styles" width={291} left={10}>
            <BigButton width={114} icon={<ConditionalIcon />} lines={["Conditional", "Formatting"]} arrow />
            <BigButton width={82} icon={<TableIcon />} lines={["Format as", "Table"]} arrow />
            <BigButton width={74} icon={<CellStyleIcon />} lines={["Cell", "Styles"]} arrow />
          </RibbonGroup>

          <RibbonGroup title="Cells" width={143} left={17}>
            <Stack $raised>
              <StackRow $width={99}>
                <WideTool $gap={5}>
                  <InsertCellsIcon />
                  Insert
                </WideTool>
                <Chevron />
              </StackRow>
              <StackRow $width={105}>
                <WideTool $gap={5}>
                  <DeleteCellsIcon />
                  Delete
                </WideTool>
                <Chevron />
              </StackRow>
              <StackRow $width={101}>
                <WideTool $gap={5}>
                  <FormatCellsIcon />
                  Format
                </WideTool>
                <Chevron />
              </StackRow>
            </Stack>
          </RibbonGroup>

          <RibbonGroup title="Editing" width={216} left={12}>
            <Stack $raised>
              <StackRow $width={49}>
                <Tool aria-label="AutoSum"><SumIcon /></Tool>
                <Chevron />
              </StackRow>
              <StackRow $width={46}>
                <Tool aria-label="Fill"><FillDownIcon /></Tool>
                <Chevron />
              </StackRow>
              <StackRow $width={46}>
                <Tool aria-label="Clear"><EraserIcon /></Tool>
                <Chevron />
              </StackRow>
            </Stack>
            <BigButton width={82} icon={<SortIcon />} lines={["Sort &", "Filter"]} arrow />
            <BigButton width={52} icon={<FindIcon />} lines={["Find &", "Select"]} arrow />
          </RibbonGroup>

          <RibbonGroup title="Ideas" width={88}>
            <BigButton width={88} icon={<IdeasIcon />} lines={["Ideas"]} />
          </RibbonGroup>

          <CollapseButton aria-label="Collapse the Ribbon">
            <Icon w={16} h={10} strokeWidth="2">
              <path d="M1 9l7-7 7 7" />
            </Icon>
          </CollapseButton>
        </Ribbon>

        <FormulaBar>
          <NameBox>
            <NameInput aria-label="Name Box" defaultValue="H6" />
            <svg width="8" height="5"><polygon points="0,0 8,0 4,5" fill="#777" /></svg>
          </NameBox>
          <DotHandle $top={10} $left={20} $right={22}>
            <i />
            <i />
            <i />
          </DotHandle>
          <EntryTools>
            <Tool $width={54} aria-label="Cancel">
              <Icon w={18} h={18} stroke="#c4c4c4" strokeWidth="2.500"><path d="M1 1l16 16M16 1L2 17" /></Icon>
            </Tool>
            <Tool $width={54} aria-label="Enter">
              <Icon w={20} h={18} stroke="#c4c4c4" strokeWidth="3.500"><path d="M1 10l6 6L18 2" /></Icon>
            </Tool>
            <FunctionTool $width={54} $italic $bold $size={25}>fx</FunctionTool>
          </EntryTools>
          <FormulaField>
            <FormulaInput aria-label="Formula Bar" />
            <BareButton aria-label="Expand Formula Bar">
              <Icon w={12} h={9} stroke="#6e6e6e" strokeWidth="3"><path d="M1 1.500l5 5 5-5" /></Icon>
            </BareButton>
          </FormulaField>
        </FormulaBar>

        <Work>
          <GridArea>
            <Sheet>
              <colgroup>
                <col width="42" />
                {columns.map(([name, width]) => (
                  <col key={name} width={width} />
                ))}
              </colgroup>
              <thead>
                <tr>
                  <Corner>
                    <svg width="20" height="20"><polygon points="20,0 20,20 0,20" fill="#b4b4b4" /></svg>
                  </Corner>
                  {columns.map(([name]) => (
                    <ColHead key={name} scope="col" $on={name === "H"}>
                      <ColLabel $on={name === "H"}>{name}</ColLabel>
                    </ColHead>
                  ))}
                </tr>
              </thead>
              <tbody>
                {rowNumbers.map((row) => (
                  <SheetRow key={row} row={row} />
                ))}
              </tbody>
            </Sheet>
          </GridArea>
          <ScrollY>
            <ScrollButton aria-label="Scroll up">
              <Triangle dir="up" />
            </ScrollButton>
            <ScrollTrackY>
              <ScrollThumb />
            </ScrollTrackY>
            <ScrollButton aria-label="Scroll down">
              <Triangle dir="down" />
            </ScrollButton>
          </ScrollY>
        </Work>

        <SheetBar>
          <SheetNav>
            <Triangle dir="left" color="#bdbdbd" />
            <Triangle dir="right" color="#bdbdbd" />
          </SheetNav>
          <SheetLine>
            <SheetTab>Sheet1</SheetTab>
            <AddSheet aria-label="New sheet">
              <Icon w={24} h={24} stroke="#777">
                <circle cx="12" cy="12" r="10.500" />
                <path d="M12 7v10M7 12h10" />
              </Icon>
            </AddSheet>
          </SheetLine>
          <Spacer />
          <DotHandle $top={8} $left={0} $right={17}>
            <i />
            <i />
            <i />
          </DotHandle>
          <ScrollX>
            <ScrollButton aria-label="Scroll left">
              <Triangle dir="left" />
            </ScrollButton>
            <ScrollTrackX>
              <ScrollThumb />
            </ScrollTrackX>
            <ScrollButton aria-label="Scroll right">
              <Triangle dir="right" />
            </ScrollButton>
          </ScrollX>
        </SheetBar>

        <StatusBar>
          <StatusText>Ready</StatusText>
          <Spacer />
          <ViewButton $on aria-label="Normal"><NormalViewIcon /></ViewButton>
          <ViewButton aria-label="Page Layout view"><PageViewIcon /></ViewButton>
          <ViewButton aria-label="Page Break Preview"><BreakViewIcon /></ViewButton>
          <ZoomBox>
            <BareButton aria-label="Zoom out">
              <Icon w={14} h={14}><path d="M1 7h12" /></Icon>
            </BareButton>
            <ZoomRange
              type="range"
              min="0"
              max="200"
              aria-label="Zoom"
              value={zoom}
              onChange={(e) => setZoom(Number(e.target.value))}
            />
            <BareButton aria-label="Zoom in">
              <Icon w={14} h={14}><path d="M1 7h12M7 1v12" /></Icon>
            </BareButton>
          </ZoomBox>
          <span>{zoom}%</span>
        </StatusBar>
      </Window>

      <Taskbar>
        <StartButton aria-label="Start">
          <WindowsIcon />
        </StartButton>
        {taskItems.map((item) => (
          <TaskButton key={item.name} aria-label={item.name} $active={item.active}>
            {item.icon}
            <TaskMark $many={item.many} $wide={item.active} />
          </TaskButton>
        ))}
        <Tray>
          {trayIcons.map(([name, art]) => (
            <TrayButton key={name} aria-label={name}>
              {name === "Skype" && <SkypeIcon size={24} />}
              {name === "Outlook" && <OutlookIcon size={24} />}
              {art && <svg width="24" height="24" viewBox="0 0 24 24">{art}</svg>}
            </TrayButton>
          ))}
          <Clock>
            9:09 AM
            <br />
            11/1/2019
          </Clock>
          <NoticeButton aria-label="Notifications, 6 new">
            <svg width="38" height="38" viewBox="0 0 38 38">
              <path d="M0 1h24v24h-6v6l-7-6H0z" fill="#fff" />
              <path d="M5 8h14M5 13h14M5 18h14" stroke="#060c15" strokeWidth="1.500" />
              <circle cx="24" cy="25" r="12" fill="#3a3d42" stroke="#8a8d91" />
              <text x="24" y="31" textAnchor="middle" fontSize="17" fontWeight="600" fill="#fff">6</text>
            </svg>
          </NoticeButton>
          <ShowDesktop />
        </Tray>
      </Taskbar>
    </Desktop>
  );
};

export default App;
